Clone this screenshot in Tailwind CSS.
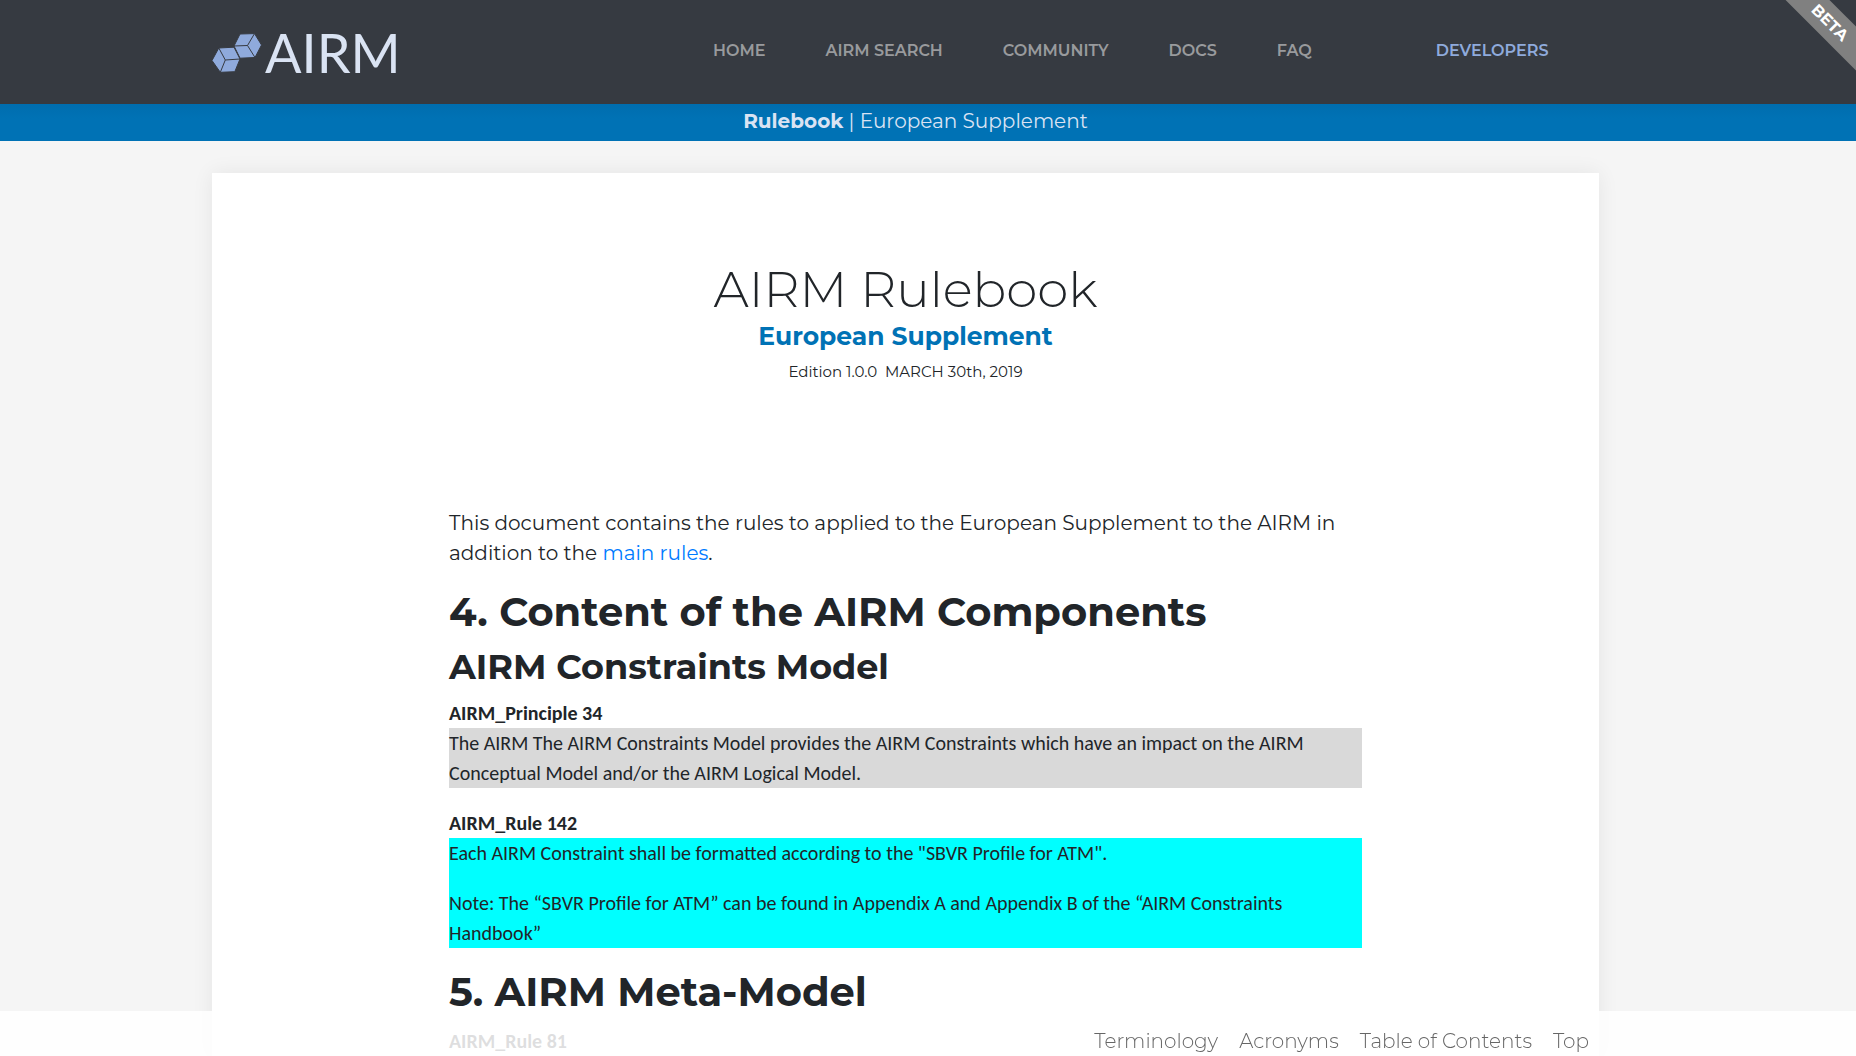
<!DOCTYPE html>
<html lang="en">
<head>
<meta charset="utf-8">
<meta name="viewport" content="width=device-width, initial-scale=1">
<title>AIRM Rulebook - European Supplement</title>
<script src="https://cdn.jsdelivr.net/npm/@tailwindcss/browser@4"></script>
</head>
<body class="flex min-h-screen flex-col bg-[#f5f5f5] font-['Montserrat','Inter',sans-serif] text-[#212529]">

<header class="relative flex h-[104px] items-start bg-[#363a41] pl-[212px]">
  <a href="#" class="mt-7 flex h-[50px] w-[501px] items-center" aria-label="AIRM home">
    <svg class="h-[50px] w-[53px] shrink-0" viewBox="0 0 53 50" fill="#8faadc" stroke="#363a41" stroke-width="1" stroke-linejoin="round" aria-hidden="true">
      <path d="M22 18 28 6 42.500 5.600 49.500 17 43 29.500 28 30.200Z"/>
      <path d="M22 18 35.500 17.500 42.500 5.600M35.500 17.500 43 29.500" fill="none"/>
      <path d="M0 32.500 6.800 20 22 19.200 28 31 22.800 43.700 8.300 44.300Z"/>
      <path d="M6.800 20 13.300 32 28 31M13.300 32 8.300 44.300" fill="none"/>
    </svg>
    <span class="font-['Lato',sans-serif] text-[54px] leading-[50px] text-[#dae3f3]">AIRM</span>
  </a>
  <nav class="mt-[39px] text-base leading-6 font-semibold whitespace-nowrap text-[#999a9d]" aria-label="Main">
    <ul class="flex gap-[60px]">
      <li><a href="#">HOME</a></li>
      <li><a href="#">AIRM SEARCH</a></li>
      <li><a href="#">COMMUNITY</a></li>
      <li><a href="#">DOCS</a></li>
      <li><a href="#">FAQ</a></li>
      <li class="pl-16"><a href="#" class="text-[#8faadc]">DEVELOPERS</a></li>
    </ul>
  </nav>
  <div class="absolute top-0 right-0 h-[104px] w-[104px] overflow-hidden">
    <div class="absolute top-[7px] right-[-44px] h-[31px] w-[140px] rotate-45 bg-[#808080] text-center text-base leading-[31px] font-bold text-white">BETA</div>
  </div>
</header>

<div class="bg-linear-to-b from-[#006dae] to-[#0072b5] to-40% pr-[257px] pl-[232px] text-center text-xl leading-[34px] text-[#dae3f3]">
  <p class="h-[37px]"><strong class="font-bold">Rulebook</strong> | European Supplement</p>
</div>

<main class="mt-8 mr-[257px] ml-[212px] flex-1 bg-white px-[237px] pt-[87px] shadow-[0_0_20px_rgba(0,0,0,0.07)]">
  <div class="text-center">
    <h1 class="text-[50px] leading-[60px] font-light">AIRM Rulebook</h1>
    <p class="text-[25px] leading-8 font-bold text-[#0072b5]">European Supplement</p>
    <p class="mt-2 text-[15px] leading-6">Edition 1.0.0&nbsp; MARCH 30th, 2019</p>
  </div>

  <p class="mt-[124px] text-xl leading-[30px]">This document contains the rules to applied to the European Supplement to the AIRM in addition to the <a href="#" class="text-[#007bff]">main rules</a>.</p>

  <h2 class="mt-5 text-[40px] leading-[48px] font-bold">4. Content of the AIRM Components</h2>
  <h3 class="mt-2 text-[35px] leading-[46px] font-bold">AIRM Constraints Model</h3>

  <section class="mt-2 font-['Calibri','Carlito','Lato',sans-serif] text-xl leading-[30px]">
    <h4 class="font-bold">AIRM_Principle 34</h4>
    <p class="bg-[#d9d9d9]">The AIRM The AIRM Constraints Model provides the AIRM Constraints which have an impact on the AIRM Conceptual Model and/or the AIRM Logical Model.</p>
  </section>

  <section class="mt-5 font-['Calibri','Carlito','Lato',sans-serif] text-xl leading-[30px]">
    <h4 class="font-bold">AIRM_Rule 142</h4>
    <div class="flex flex-col gap-5 bg-[#00ffff]">
      <p>Each AIRM Constraint shall be formatted according to the "SBVR Profile for ATM".</p>
      <p>Note: The “SBVR Profile for ATM” can be found in Appendix A and Appendix B of the “AIRM Constraints Handbook”</p>
    </div>
  </section>

  <h2 class="mt-5 text-[40px] leading-[48px] font-bold">5. AIRM Meta-Model</h2>
  <section class="mt-[10px] font-['Calibri','Carlito','Lato',sans-serif] text-xl leading-[30px]">
    <h4 class="font-bold">AIRM_Rule 81</h4>
  </section>
</main>

<nav class="fixed inset-x-0 bottom-0 flex justify-end gap-[21px] bg-white/85 pt-[15px] pr-[267px] text-xl leading-[30px] font-light text-[#666]" aria-label="Page">
  <a href="#">Terminology</a>
  <a href="#">Acronyms</a>
  <a href="#">Table of Contents</a>
  <a href="#">Top</a>
</nav>
</body>
</html>
